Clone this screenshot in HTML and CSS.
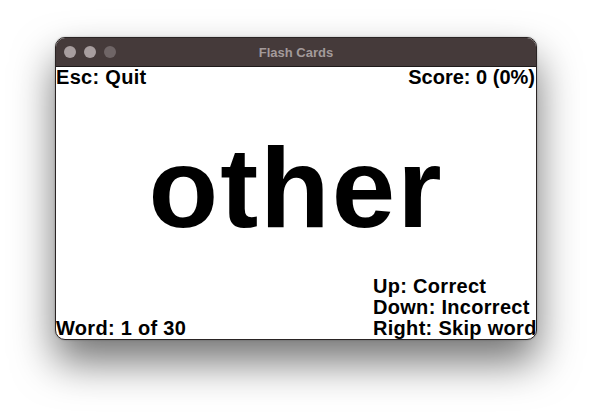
FILE: index.html
```html
<!DOCTYPE html>
<html>
<head>
<meta charset="utf-8">
<link rel="stylesheet" href="styles.css">
</head>
<body>
<div class="window">
  <div class="titlebar">
    <div class="lights">
      <span class="light"></span>
      <span class="light"></span>
      <span class="light dim"></span>
    </div>
    <div class="title">Flash Cards</div>
  </div>
  <div class="content">
    <div class="row top">
      <span>Esc: Quit</span>
      <span>Score: 0 (0%)</span>
    </div>
    <div class="word">other</div>
    <div class="row bottom">
      <span>Word: 1 of 30</span>
      <div class="help">
        <div>Up: Correct</div>
        <div>Down: Incorrect</div>
        <div>Right: Skip word</div>
      </div>
    </div>
  </div>
</div>
</body>
</html>
```

FILE: styles.css
```css
html, body {
  margin: 0;
  padding: 0;
  background: #ffffff;
}
body {
  min-height: 412px;
  box-sizing: border-box;
  padding: 37px 0 0 55px;
  font-family: "Liberation Sans", Arial, sans-serif;
}
.window {
  width: 480px;
  border: 1px solid #2a2424;
  border-radius: 10px;
  overflow: hidden;
  box-shadow: 0 22px 42px rgba(0, 0, 0, 0.55), 0 0 2px rgba(0,0,0,0.3);
  background: #fff;
}
.titlebar {
  height: 28px;
  background: #453a3a;
  border-bottom: 1px solid #1e1a1a;
  display: flex;
  align-items: center;
  position: relative;
}
.lights {
  display: flex;
  gap: 8px;
  padding-left: 8px;
}
.light {
  width: 12px;
  height: 12px;
  border-radius: 50%;
  background: #a89e9f;
}
.light.dim {
  background: #6f6566;
}
.title {
  position: absolute;
  left: 0;
  right: 0;
  text-align: center;
  color: #a39a9a;
  font-weight: bold;
  font-size: 13px;
}
.content {
  height: 272px;
  display: flex;
  flex-direction: column;
  font-weight: bold;
  font-size: 20px;
  color: #000;
}
.row {
  display: flex;
  justify-content: space-between;
  align-items: flex-end;
  line-height: 20px;
  white-space: nowrap;
  letter-spacing: 0.3px;
}
.row.top span:last-child {
  padding-right: 1px;
  letter-spacing: 0;
}
.row.bottom {
  line-height: 21px;
}
.help {
  width: 163px;
  letter-spacing: 0.3px;
}
.word {
  flex: 1;
  display: flex;
  align-items: center;
  justify-content: center;
  font-size: 114px;
  letter-spacing: 2px;
  line-height: 1;
  padding-top: 12px;
}
```
